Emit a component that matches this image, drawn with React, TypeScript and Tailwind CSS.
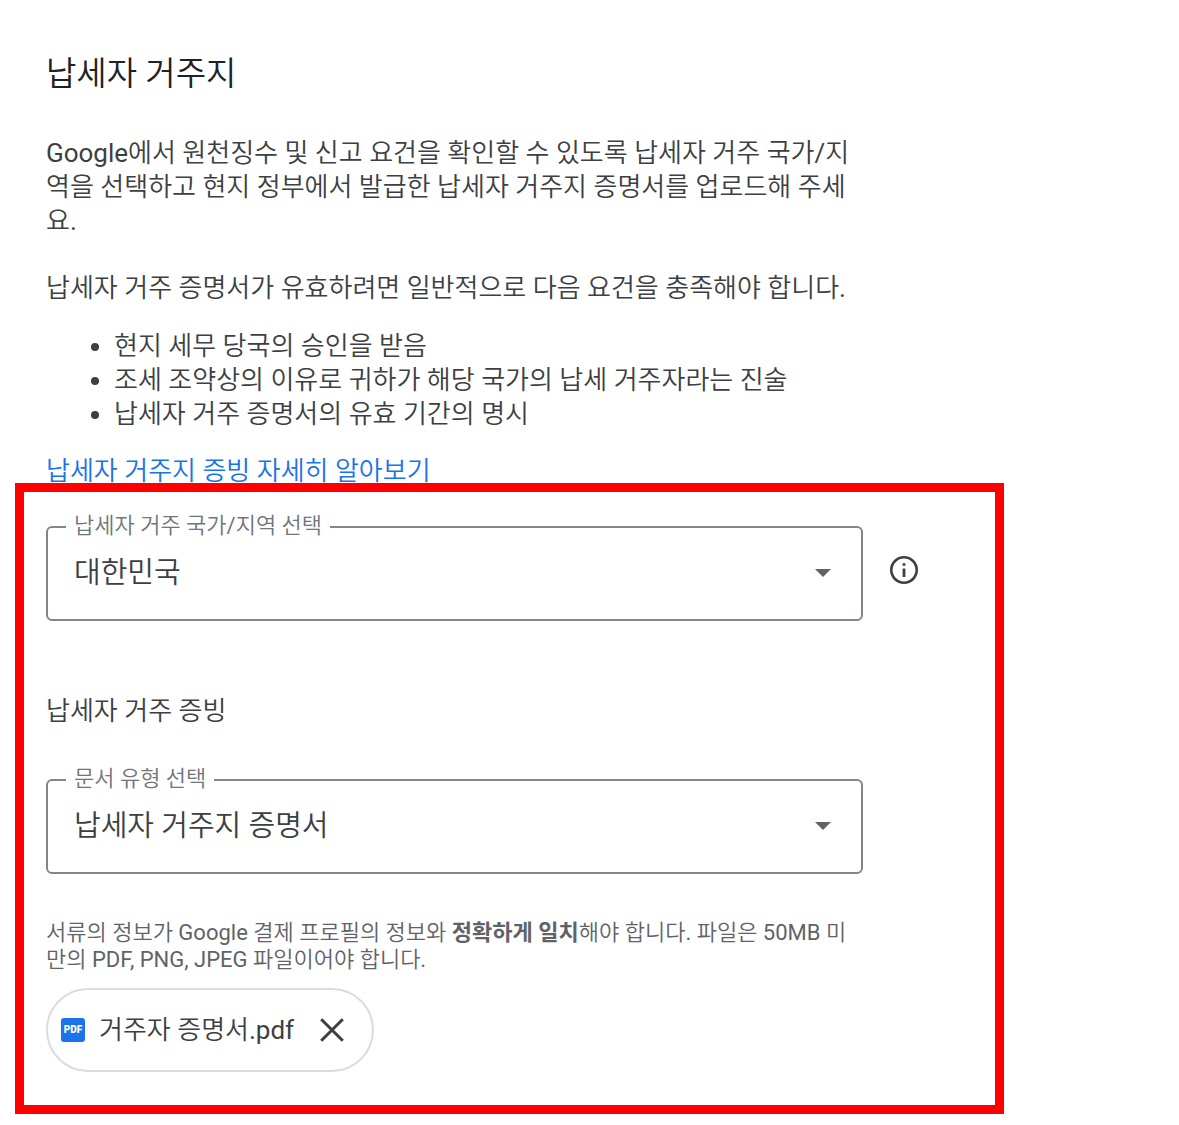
import { useState } from "react";

type SelectFieldProps = {
  id: string;
  label: string;
  options: string[];
};

function SelectField({ id, label, options }: SelectFieldProps) {
  const [value, setValue] = useState(options[0]);

  return (
    <div className="relative w-full max-w-[817px]">
      <select
        id={id}
        value={value}
        onChange={(e) => setValue(e.target.value)}
        className="block h-[95px] w-full appearance-none rounded-md border-2 border-[#80868b] bg-white pr-16 pb-0.5 pl-[26px] text-[29px] text-[#3c4043]"
      >
        {options.map((option) => (
          <option key={option}>{option}</option>
        ))}
      </select>
      <label
        htmlFor={id}
        className="absolute -top-3.5 left-5 bg-white px-2 text-[22px] leading-7 text-[#6f757b]"
      >
        {label}
      </label>
      <svg
        viewBox="0 0 16 8"
        className="pointer-events-none absolute top-[43px] right-8 h-2 w-4 fill-[#5f6368]"
        aria-hidden="true"
      >
        <path d="M0 0h16L8 8z" />
      </svg>
    </div>
  );
}

function InfoIcon() {
  return (
    <svg viewBox="0 0 28 28" className="size-7" fill="none" aria-hidden="true">
      <circle cx="14" cy="14" r="12.7" stroke="#3c4043" strokeWidth="2.6" />
      <path d="M12.6 7.2h2.8v2.6h-2.8zM12.6 12.6h2.8v8.4h-2.8z" fill="#3c4043" />
    </svg>
  );
}

const requirements = [
  "현지 세무 당국의 승인을 받음",
  "조세 조약상의 이유로 귀하가 해당 국가의 납세 거주자라는 진술",
  "납세자 거주 증명서의 유효 기간의 명시",
];

export default function App() {
  const [file, setFile] = useState<string | null>("거주자 증명서.pdf");

  return (
    <main className="min-h-screen bg-white px-[15px] pt-[50px] pb-[11px] font-[Roboto,'Noto_Sans_CJK_KR_DemiLight','Noto_Sans_CJK_KR',sans-serif] text-[26px] leading-[34px] font-normal text-[#3c4043]">
      {/* Intro */}
      <div className="max-w-[848px] pl-[31px]">
        <h1 className="text-[33px] leading-[48px] text-[#202124]">납세자 거주지</h1>
        <p className="mt-[38px]">
          Google에서 원천징수 및 신고 요건을 확인할 수 있도록 납세자 거주 국가/지역을 선택하고 현지
          정부에서 발급한 납세자 거주지 증명서를 업로드해 주세요.
        </p>
        <p className="mt-[33px]">
          납세자 거주 증명서가 유효하려면 일반적으로 다음 요건을 충족해야 합니다.
        </p>
        <ul className="mt-6 list-disc pl-[68px]">
          {requirements.map((item) => (
            <li key={item}>{item}</li>
          ))}
        </ul>
        <a href="#learn-more" className="mt-7 block leading-6 text-[#1a73e8]">
          납세자 거주지 증빙 자세히 알아보기
        </a>
      </div>

      {/* Residence form */}
      <section className="max-w-[989px] border-[9px] border-[#ff0000] px-[22px] pt-[34px] pb-[33px]">
        <div className="flex items-center gap-[27px]">
          <SelectField id="country" label="납세자 거주 국가/지역 선택" options={["대한민국"]} />
          <button type="button" aria-label="도움말" className="mb-2 shrink-0">
            <InfoIcon />
          </button>
        </div>

        <h2 className="mt-[73px]">납세자 거주 증빙</h2>

        <div className="mt-[51px]">
          <SelectField id="document" label="문서 유형 선택" options={["납세자 거주지 증명서"]} />
        </div>

        <p className="mt-[45px] max-w-[815px] text-[22px] leading-[27px] text-[#5f6368]">
          서류의 정보가 Google 결제 프로필의 정보와{" "}
          <b className="font-[Roboto,'Noto_Sans_CJK_KR',sans-serif] font-bold">정확하게 일치</b>해야
          합니다. 파일은 50MB 미만의 PDF, PNG, JPEG 파일이어야 합니다.
        </p>

        {file && (
          <div className="mt-[15px] inline-flex h-[84px] items-center rounded-full border-2 border-[#dadce0] pr-7 pl-[13px]">
            <span className="flex size-6 items-center justify-center rounded-[3px] bg-[#1a73e8] text-[10px] leading-none font-black text-white">
              PDF
            </span>
            <span className="ml-3.5">{file}</span>
            <button
              type="button"
              aria-label="파일 삭제"
              onClick={() => setFile(null)}
              className="ml-[26px]"
            >
              <svg viewBox="0 0 24 24" className="size-6" fill="none" aria-hidden="true">
                <path d="M1.2 1.2l21.6 21.6M22.8 1.2L1.2 22.8" stroke="#3c4043" strokeWidth="3" />
              </svg>
            </button>
          </div>
        )}
      </section>
    </main>
  );
}
